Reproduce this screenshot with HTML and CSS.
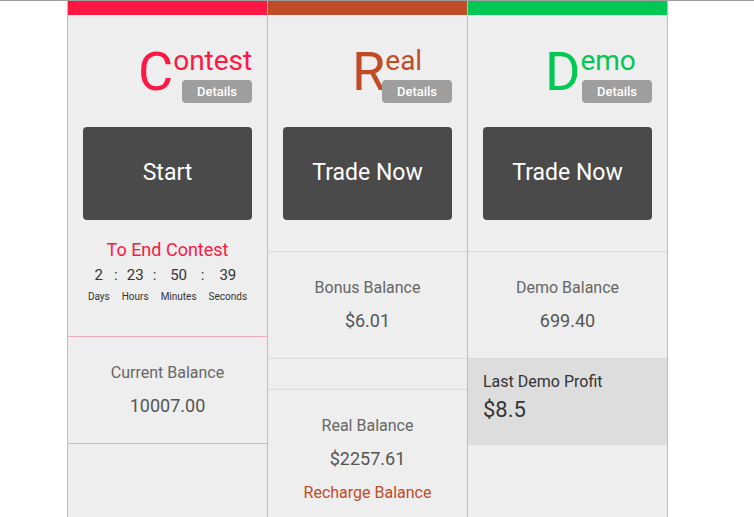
FILE: index.html
```html
<!DOCTYPE html>
<html lang="en">

<head>
    <meta charset="utf-8">
    <meta name="viewport" content="width=device-width, initial-scale=1.0">
    <title>Accounts</title>
    <link rel="stylesheet" href="styles.css">
</head>

<body>
    <main class="board">
        <!-- contest -->
        <section class="market contest">
            <div class="bar"></div>
            <h2 class="title"><span class="initial">C</span><span class="rest">ontest</span></h2>
            <button class="details">Details</button>
            <button class="action">Start</button>

            <div class="countdown">
                <p class="countdown-title">To End Contest</p>
                <div class="timer">
                    <div class="unit"><span class="num">2</span><span class="unit-label">Days</span></div>
                    <span class="sep">:</span>
                    <div class="unit"><span class="num">23</span><span class="unit-label">Hours</span></div>
                    <span class="sep">:</span>
                    <div class="unit"><span class="num">50</span><span class="unit-label">Minutes</span></div>
                    <span class="sep">:</span>
                    <div class="unit"><span class="num">39</span><span class="unit-label">Seconds</span></div>
                </div>
            </div>

            <div class="balance current">
                <p class="balance-label">Current Balance</p>
                <p class="balance-value">10007.00</p>
            </div>
        </section>

        <!-- real -->
        <section class="market real">
            <div class="bar"></div>
            <h2 class="title"><span class="initial">R</span><span class="rest">eal</span></h2>
            <button class="details">Details</button>
            <button class="action">Trade Now</button>

            <div class="balance bonus">
                <p class="balance-label">Bonus Balance</p>
                <p class="balance-value">$6.01</p>
            </div>

            <div class="balance real-balance">
                <p class="balance-label">Real Balance</p>
                <p class="balance-value">$2257.61</p>
                <a class="recharge" href="#">Recharge Balance</a>
            </div>
        </section>

        <!-- demo -->
        <section class="market demo">
            <div class="bar"></div>
            <h2 class="title"><span class="initial">D</span><span class="rest">emo</span></h2>
            <button class="details">Details</button>
            <button class="action">Trade Now</button>

            <div class="balance demo-balance">
                <p class="balance-label">Demo Balance</p>
                <p class="balance-value">699.40</p>
            </div>

            <div class="profit">
                <p class="profit-label">Last Demo Profit</p>
                <p class="profit-value">$8.5</p>
            </div>
        </section>
    </main>
</body>

</html>
```

FILE: styles.css
```css
body {
    margin: 0;
    border-top: 1px solid #9e9e9e;
    background-color: #fff;
    font-family: Roboto, "Liberation Sans", sans-serif;
}

p {
    margin: 0;
}

.board {
    display: flex;
    align-items: stretch;
    margin-left: 67px;
    min-height: calc(100vh - 1px);
}

.market {
    width: 199px;
    background-color: #eeeeee;
    border-right: 1px solid #bdbdbd;
}

.market:first-child {
    border-left: 1px solid #bdbdbd;
}

.bar {
    height: 14px;
}

.contest .bar {
    background-color: #ff1744;
}

.real .bar {
    background-color: #c04c27;
}

.demo .bar {
    background-color: #00c853;
}

/* heading with the big first letter */

.title {
    display: flex;
    align-items: flex-start;
    margin: 30px 0 0;
    font-weight: 400;
}

.contest .title {
    padding-left: 70px;
    color: #ff1744;
}

.real .title {
    padding-left: 84px;
    color: #c04c27;
}

.demo .title {
    padding-left: 77px;
    color: #00c853;
}

.initial {
    font-size: 54px;
    line-height: 1;
}

.rest {
    font-size: 28px;
    line-height: 1;
    margin-top: 2px;
}

button {
    font-family: inherit;
    border: none;
    cursor: pointer;
}

.details {
    position: relative;
    display: block;
    width: 70px;
    height: 23px;
    margin: -19px 15px 0 auto;
    padding: 0;
    border-radius: 4px;
    background-color: #9e9e9e;
    color: #fff;
    font-size: 13px;
    font-weight: 500;
}

.action {
    display: block;
    width: calc(100% - 30px);
    height: 93px;
    margin: 24px 15px 0;
    padding: 0 0 2px;
    border-radius: 4px;
    background-color: #4a4a4a;
    color: #fff;
    font-size: 23px;
}

/* countdown */

.countdown {
    margin-top: 19px;
    text-align: center;
}

.countdown-title {
    font-size: 18px;
    line-height: 21px;
    color: #ff1744;
}

.timer {
    display: flex;
    justify-content: center;
    margin-top: 6px;
    color: #333;
}

.unit {
    display: flex;
    flex-direction: column;
    align-items: center;
}

.num,
.sep {
    font-size: 15px;
    line-height: 18px;
}

.sep {
    width: 12px;
    text-align: center;
}

.unit-label {
    font-size: 10px;
    line-height: 12px;
    margin-top: 7px;
}

/* balances */

.balance {
    padding: 26px 0 27px;
    border-top: 1px solid #dadada;
    border-bottom: 1px solid #dadada;
    text-align: center;
}

.balance-label {
    font-size: 16px;
    line-height: 19px;
    color: #666;
}

.balance-value {
    margin-top: 13px;
    font-size: 18px;
    line-height: 21px;
    color: #555;
}

.current {
    margin: 33px -1px 0;
    border: 1px solid #eeaabb;
}

.bonus,
.demo-balance {
    margin-top: 31px;
}

.real-balance {
    margin-top: 30px;
    border-bottom: none;
}

.recharge {
    display: block;
    margin-top: 14px;
    font-size: 16px;
    line-height: 19px;
    color: #c04c27;
    text-decoration: none;
}

.profit {
    padding: 13px 15px 22px;
    background-color: #dddddd;
    color: #333;
}

.profit-label {
    font-size: 16px;
    line-height: 19px;
}

.profit-value {
    margin-top: 6px;
    font-size: 22px;
    line-height: 26px;
}
```
